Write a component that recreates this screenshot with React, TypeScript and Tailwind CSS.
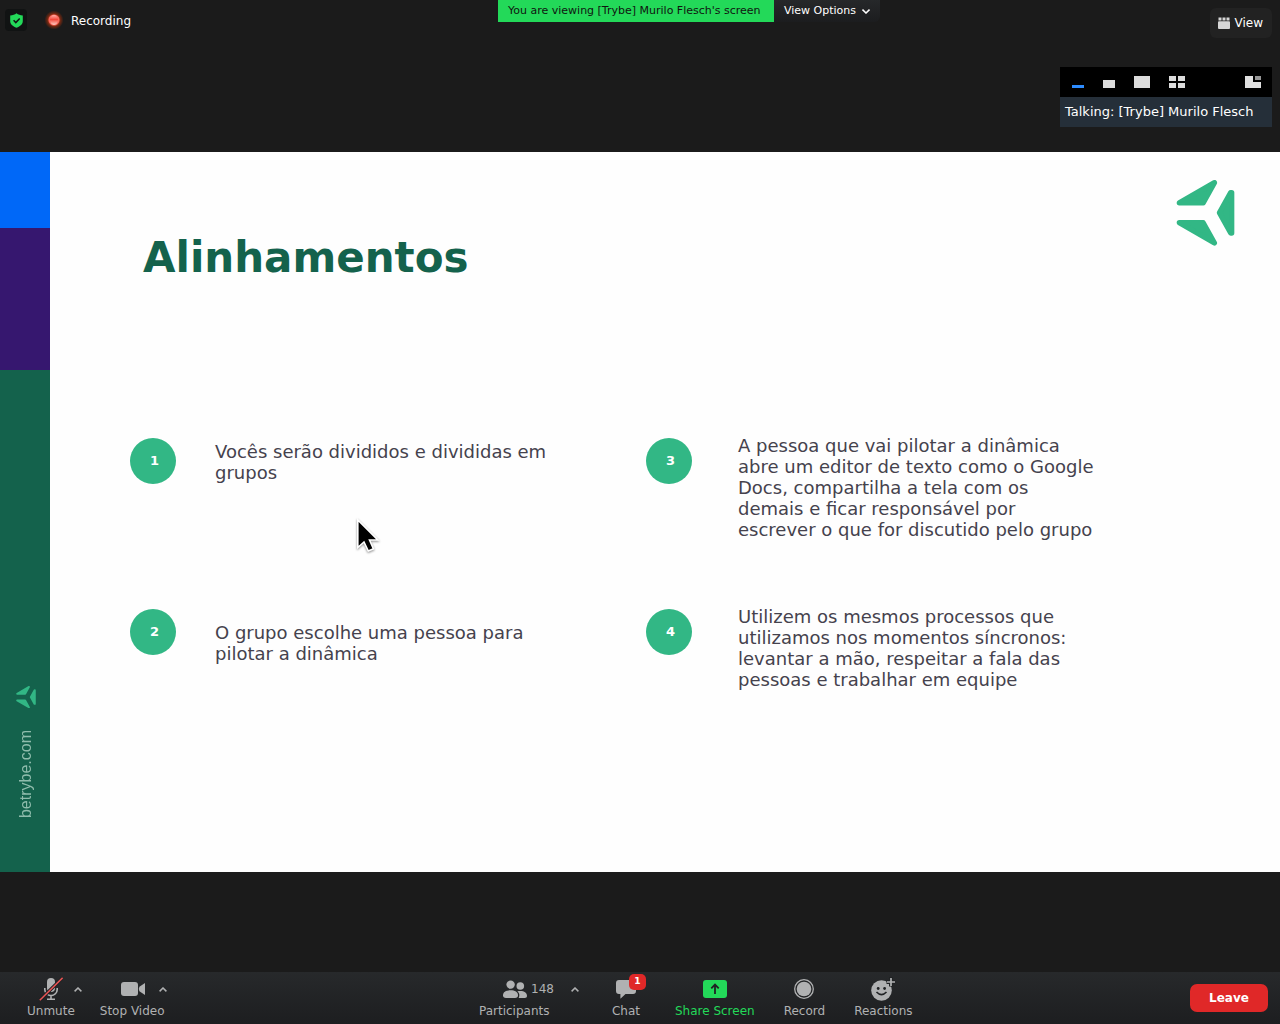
import type { ReactNode } from "react";

function TrybeMark({ className }: { className: string }) {
  return (
    <svg
      viewBox="0 0 178 198"
      className={className}
      fill="currentColor"
      stroke="currentColor"
      strokeWidth="16"
      strokeLinejoin="round"
      aria-hidden="true"
    >
      <path d="M10 69 116 8 82 69Z" />
      <path d="M10 129 116 190 82 129Z" />
      <path d="M131 99 165 38 168 38 168 160 165 160Z" />
    </svg>
  );
}

function Caret() {
  return (
    <svg viewBox="0 0 8 5" className="h-[5px] w-2" fill="none" stroke="currentColor" strokeWidth="1.5" aria-hidden="true">
      <path d="M.6 4.4 4 1 7.4 4.4" />
    </svg>
  );
}

function MicIcon() {
  return (
    <svg viewBox="0 0 24 24" className="h-6 w-6" aria-hidden="true">
      <rect x="8" y="1" width="8" height="14" rx="4" fill="#b0b1b2" />
      <path d="M5.8 11v1.4a6.2 6.2 0 0 0 12.4 0V11M12 18.6V22M8 22.3h8" fill="none" stroke="#b0b1b2" strokeWidth="1.6" />
      <path d="M.8 23.2 23.6.8" stroke="#202224" strokeWidth="3.4" />
      <path d="M.8 23.2 23.6.8" stroke="#ea5454" strokeWidth="1.5" />
    </svg>
  );
}

function VideoIcon() {
  return (
    <svg viewBox="0 0 25 14" className="h-[14px] w-[25px]" fill="#b0b1b2" aria-hidden="true">
      <rect x="1" width="17" height="14" rx="3" />
      <path d="M19.400 4.800 25 1v12l-5.600-3.800Q18.200 7 19.400 4.800Z" />
    </svg>
  );
}

function PeopleIcon() {
  return (
    <svg viewBox="0 0 24 18" className="h-[18px] w-6" fill="#b0b1b2" aria-hidden="true">
      <circle cx="7.600" cy="4.600" r="4.200" />
      <circle cx="17.300" cy="6" r="3.800" />
      <path d="M0 15.200C0 12 3 10.200 7.500 10.200S15 12 15 15.200C15 17 14 18 12 18H3C1 18 0 17 0 15.200Z" />
      <path d="M14.400 11.300C19.500 10 24 12 24 15.800 24 17.300 23.200 18 21.800 18H15.700C16.900 15.500 16.500 13 14.400 11.300Z" />
    </svg>
  );
}

function ChatIcon() {
  return (
    <svg viewBox="0 0 20 19" className="h-[19px] w-5" fill="#b0b1b2" aria-hidden="true">
      <path d="M3 0h14q3 0 3 3v8q0 3-3 3h-7.500L4.400 18.700V14H3q-3 0-3-3V3q0-3 3-3Z" />
    </svg>
  );
}

function ShareIcon() {
  return (
    <svg viewBox="0 0 24 18" className="h-[18px] w-6" aria-hidden="true">
      <rect width="24" height="18" rx="3" fill="#23d959" />
      <path d="M12 14V5M8.300 8.300 12 4.600l3.700 3.700" fill="none" stroke="#202224" strokeWidth="1.800" />
    </svg>
  );
}

function RecordIcon() {
  return (
    <svg viewBox="0 0 20 20" className="h-5 w-5" aria-hidden="true">
      <circle cx="10" cy="10" r="9.300" fill="none" stroke="#b0b1b2" strokeWidth="1.300" />
      <circle cx="10" cy="10" r="7.300" fill="#b0b1b2" />
    </svg>
  );
}

function ReactionIcon() {
  return (
    <svg viewBox="0 0 24 24" className="h-6 w-6" aria-hidden="true">
      <circle cx="10.500" cy="13.500" r="10.300" fill="#b0b1b2" />
      <path d="M20 0v9.500M15.500 5h9" stroke="#202224" strokeWidth="4" />
      <path d="M20 1v8M16 5h8" stroke="#b0b1b2" strokeWidth="1.700" />
      <circle cx="7.200" cy="11.500" r="1.400" fill="#202224" />
      <circle cx="13.600" cy="11.500" r="1.400" fill="#202224" />
      <path d="M5.500 15q5 5.200 10 0" fill="none" stroke="#202224" strokeWidth="1.600" />
    </svg>
  );
}

function Tool({ label, children, green }: { label: string; children: ReactNode; green?: boolean }) {
  return (
    <button type="button" className={green ? "flex flex-col items-center text-[#23d959]" : "flex flex-col items-center"}>
      <span className="flex h-[22px] items-center">{children}</span>
      <span className="mt-[3px] whitespace-nowrap text-xs leading-4">{label}</span>
    </button>
  );
}

function Step({ n, children, className, textClass }: { n: number; children: ReactNode; className: string; textClass: string }) {
  return (
    <li className={"flex items-start " + className}>
      <span className="mt-[3px] flex h-[46px] w-[46px] shrink-0 items-center justify-center rounded-full bg-[#32b785] pl-[3px] text-[13px] font-bold text-white">
        {n}
      </span>
      <p className={"text-lg leading-[21px] text-[#45424d] " + textClass}>{children}</p>
    </li>
  );
}

export default function App() {
  return (
    <div className="flex min-h-screen flex-col bg-[#1b1b1b] font-['DejaVu_Sans',sans-serif] text-white">
      <header className="grid grid-cols-[498fr_382fr_400fr] items-start pb-[25px]">
        <div className="flex items-center pt-[9px] pl-[5px] text-xs">
          <button type="button" aria-label="Meeting security" className="flex h-[22px] w-[22px] items-center justify-center rounded bg-[#111313]">
            <svg viewBox="0 0 13 15" className="h-[15px] w-[13px]" aria-hidden="true">
              <path d="M6.500.3C8.200 1.700 10.200 2.300 12.800 2.500V8c0 3.200-2.500 5.300-6.300 6.800C2.700 13.300.2 11.200.2 8V2.500C2.800 2.300 4.800 1.700 6.500.3Z" fill="#23d959" />
              <path d="M3.600 7.300 5.800 9.600 9.700 5.500" fill="none" stroke="#111313" strokeWidth="1.500" />
            </svg>
          </button>
          <svg viewBox="0 0 20 20" className="ml-[17px] h-5 w-5" aria-hidden="true">
            <defs>
              <radialGradient id="glow">
                <stop offset="0.450" stopColor="#d83a1c" />
                <stop offset="0.700" stopColor="#6b2712" />
                <stop offset="1" stopColor="#1b1b1b" />
              </radialGradient>
              <linearGradient id="lamp" x2="0" y2="1">
                <stop stopColor="#ffb0a8" />
                <stop offset="0.450" stopColor="#f5483b" />
                <stop offset="1" stopColor="#ffd0c8" />
              </linearGradient>
            </defs>
            <circle cx="10" cy="10" r="9.500" fill="url(#glow)" />
            <circle cx="10" cy="10" r="5.500" fill="#f9685c" />
            <ellipse cx="10" cy="10" rx="4" ry="5" fill="url(#lamp)" />
          </svg>
          <span className="ml-[7px] pt-[2px]">Recording</span>
        </div>
        <div className="flex h-[22px] text-[11px] whitespace-nowrap">
          <p className="flex w-[276px] shrink-0 items-center bg-[#23d959] px-[10px] pt-px text-[#101510]">
            You are viewing [Trybe] Murilo Flesch's screen
          </p>
          <button type="button" className="flex grow items-center gap-[6px] rounded-br-md bg-linear-to-b from-[#26282a] to-[#1c1d1f] pt-px pl-[10px]">
            View Options
            <svg viewBox="0 0 8 5" className="h-[5px] w-2" fill="none" stroke="currentColor" strokeWidth="1.500" aria-hidden="true">
              <path d="M.5.6 4 4 7.500.6" />
            </svg>
          </button>
        </div>
        <div className="flex flex-col items-end pt-2 pr-2">
          <button type="button" className="flex h-[30px] items-center gap-[5px] rounded-md bg-[#222222] pr-[9px] pl-2 text-xs">
            <svg viewBox="0 0 12 12" className="h-3 w-3" fill="#d6d6d6" aria-hidden="true">
              <path d="M.5.500h3v3h-3zM4.500.500h3v3h-3zM8.500.500h3v3h-3z" />
              <rect y="4.300" width="12" height="7.700" rx="1" />
            </svg>
            View
          </button>
          <section className="mt-[29px] w-[212px]" aria-label="Video panel">
            <div className="flex h-[30px] items-center bg-black pr-[11px] pl-3">
              <button type="button" aria-label="Minimize" className="flex h-3 items-end">
                <span className="h-[3px] w-3 bg-[#2d8cff]" />
              </button>
              <button type="button" aria-label="Small view" className="ml-[19px] flex h-3 items-end">
                <span className="h-2 w-3 bg-[#dcdcdc]" />
              </button>
              <button type="button" aria-label="Large view" className="ml-[19px] h-3 w-4 bg-[#dcdcdc]" />
              <button type="button" aria-label="Gallery view" className="ml-[19px] grid h-3 w-4 grid-cols-2 gap-[2px]">
                <span className="bg-[#dcdcdc]" />
                <span className="bg-[#dcdcdc]" />
                <span className="bg-[#dcdcdc]" />
                <span className="bg-[#dcdcdc]" />
              </button>
              <button type="button" aria-label="Speaker view" className="ml-auto">
                <svg viewBox="0 0 16 12" className="h-3 w-4" aria-hidden="true">
                  <path d="M0 0h8v6h8v6H0Z" fill="#e0e0e0" />
                  <path d="M10 0h6v4h-6Z" fill="#979797" />
                </svg>
              </button>
            </div>
            <p className="bg-[#252f39] px-[5px] text-[13px] leading-[30px] whitespace-nowrap">Talking: [Trybe] Murilo Flesch</p>
          </section>
        </div>
      </header>

      <main className="relative flex aspect-video w-full bg-[#fefefe]">
        <aside className="flex w-[50px] shrink-0 flex-col">
          <div className="h-[76px] bg-[#0068f8]" />
          <div className="h-[142px] bg-[#36176f]" />
          <div className="flex grow flex-col items-center justify-end bg-[#14624c] pr-px pb-[54px] pl-[3px]">
            <TrybeMark className="w-5 text-[#32b785]" />
            <a
              href="#betrybe"
              className="mt-[22px] rotate-180 font-['Liberation_Sans',sans-serif] text-base leading-5 text-[#8fbcac] [writing-mode:vertical-rl]"
            >
              betrybe.com
            </a>
          </div>
        </aside>
        <div className="min-w-0 grow">
          <div className="flex items-start justify-between pt-7 pr-[45px] pl-[93px]">
            <h1 className="mt-[53px] text-[42px] leading-[50px] font-bold text-[#14624c]">Alinhamentos</h1>
            <TrybeMark className="w-[59px] text-[#32b785]" />
          </div>
          <ol className="mt-[152px] grid grid-flow-col grid-cols-[516fr_634fr] grid-rows-[171px_auto] pl-20">
            <Step n={1} className="gap-[39px]" textClass="mt-[6px] w-[340px]">
              Vocês serão divididos e divididas em grupos
            </Step>
            <Step n={2} className="gap-[39px]" textClass="mt-4 w-[340px]">
              O grupo escolhe uma pessoa para pilotar a dinâmica
            </Step>
            <Step n={3} className="gap-[46px]" textClass="w-[358px]">
              A pessoa que vai pilotar a dinâmica abre um editor de texto como o Google Docs, compartilha a tela com os demais e ficar responsável por escrever o que for discutido pelo grupo
            </Step>
            <Step n={4} className="gap-[46px]" textClass="w-[340px]">
              Utilizem os mesmos processos que utilizamos nos momentos síncronos: levantar a mão, respeitar a fala das pessoas e trabalhar em equipe
            </Step>
          </ol>
        </div>
        <svg viewBox="0 0 24 36" className="absolute top-[366px] left-[356px] h-9 w-6 drop-shadow-[0_1px_1px_rgba(0,0,0,0.45)]" aria-hidden="true">
          <path
            d="M1.800 2V29.500L8 24 12.300 33 17.500 30.800 13.500 22H21.800Z"
            fill="#000"
            stroke="#fff"
            strokeWidth="1.600"
          />
        </svg>
      </main>

      <div className="grow" />

      <footer className="flex h-[52px] items-start justify-between bg-linear-to-b from-[#27292b] to-[#1d1e20] pr-3 pl-[27px] text-[#b0b1b2]">
        <div className="flex gap-[25px] pt-[6px] pr-[37px]">
          <div className="relative">
            <Tool label="Unmute">
              <MicIcon />
            </Tool>
            <button type="button" aria-label="Audio options" className="absolute top-[9px] -right-[7px]">
              <Caret />
            </button>
          </div>
          <div className="relative">
            <Tool label="Stop Video">
              <VideoIcon />
            </Tool>
            <button type="button" aria-label="Video options" className="absolute top-[9px] -right-[2px]">
              <Caret />
            </button>
          </div>
        </div>
        <div className="flex items-start pt-[6px]">
          <button type="button" className="flex flex-col items-start">
            <span className="flex h-[22px] items-center gap-1 pl-6 text-xs">
              <PeopleIcon />
              <span className="pb-px">148</span>
            </span>
            <span className="mt-[3px] text-xs leading-4">Participants</span>
          </button>
          <button type="button" aria-label="Participant options" className="mt-[9px] ml-[17px] flex">
            <Caret />
          </button>
          <div className="relative ml-[33px]">
            <Tool label="Chat">
              <ChatIcon />
            </Tool>
            <span className="absolute -top-1 left-[17px] flex h-4 w-[17px] items-center justify-center rounded-[5px] bg-[#e02828] text-[9px] font-bold text-white">
              1
            </span>
          </div>
          <div className="ml-[35px] flex gap-[29px]">
            <Tool label="Share Screen" green>
              <ShareIcon />
            </Tool>
            <Tool label="Record">
              <RecordIcon />
            </Tool>
            <Tool label="Reactions">
              <ReactionIcon />
            </Tool>
          </div>
        </div>
        <button type="button" className="mt-3 h-7 w-[78px] rounded-[7px] bg-[#e02828] text-xs font-bold text-white">
          Leave
        </button>
      </footer>
    </div>
  );
}
